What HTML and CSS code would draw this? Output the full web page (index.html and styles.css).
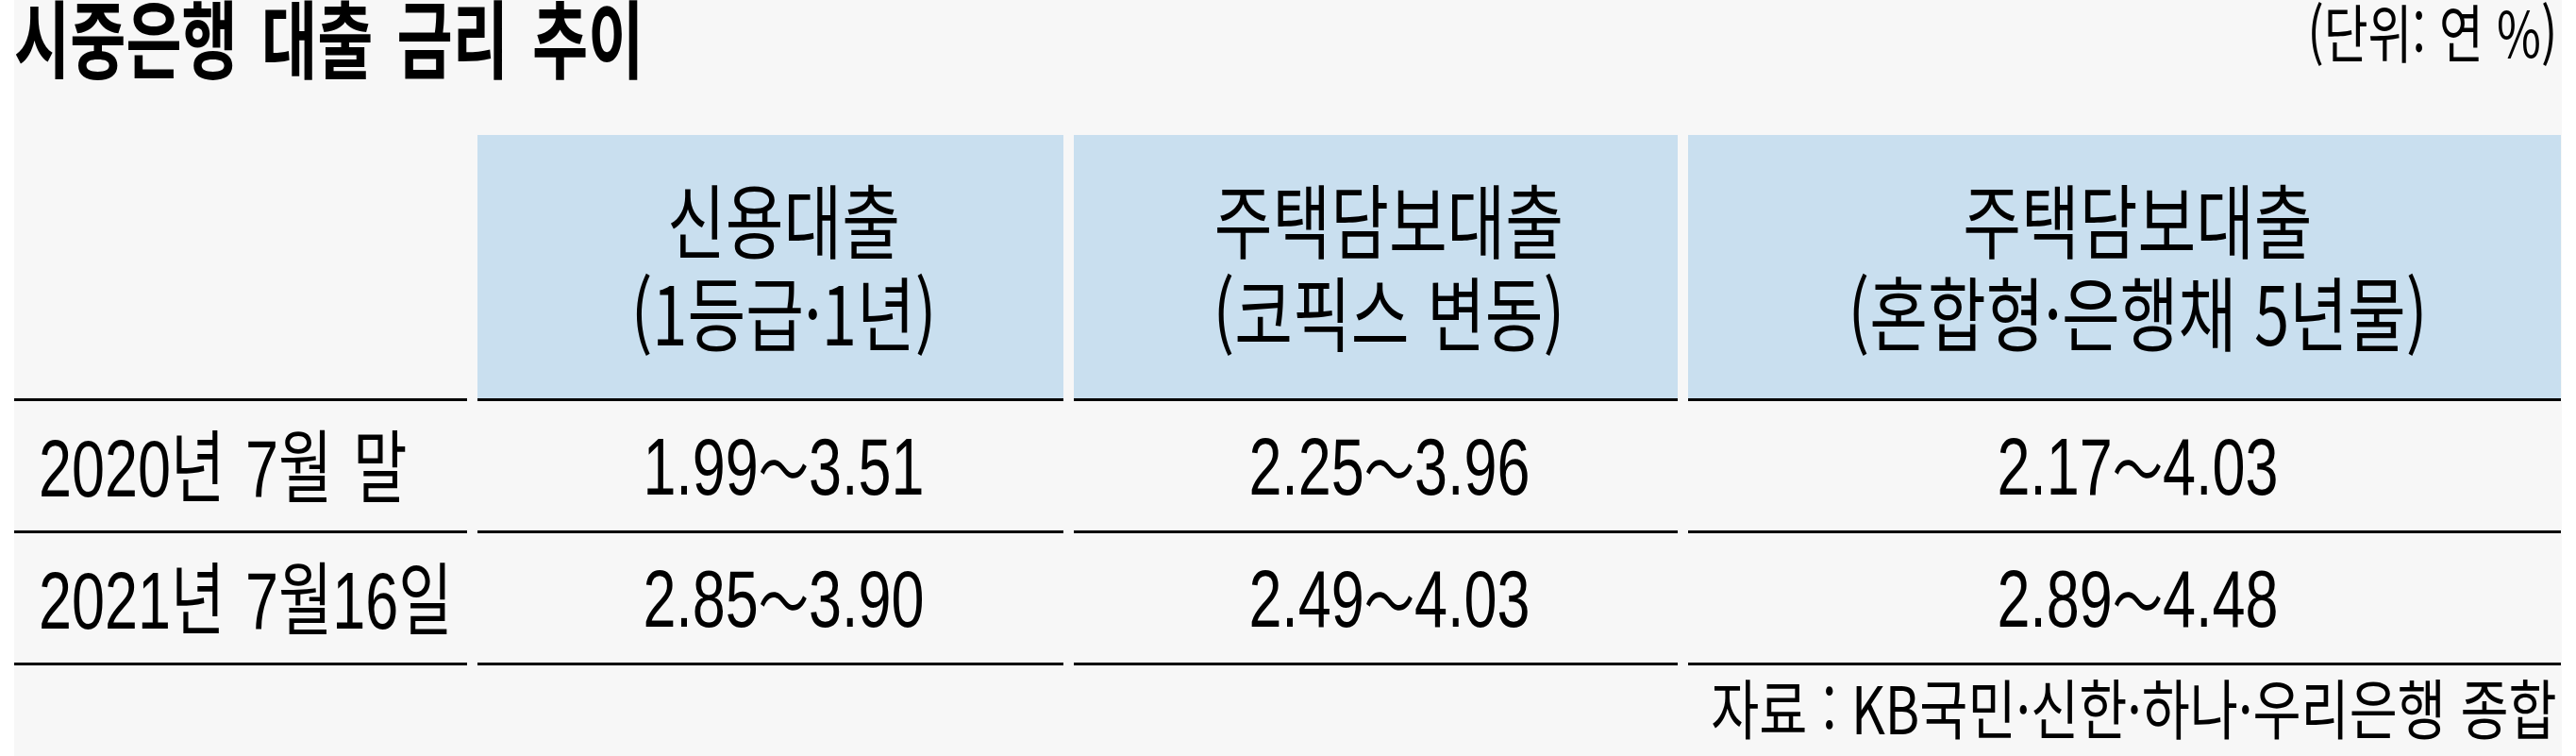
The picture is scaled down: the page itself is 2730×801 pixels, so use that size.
FILE: index.html
```html
<!DOCTYPE html>
<html lang="ko">
<head>
<meta charset="utf-8">
<title>시중은행 대출 금리 추이</title>
<link rel="stylesheet" href="styles.css">
</head>
<body>
<div class="board">
  <div class="top">
    <h1 class="title"><span class="tx">시중은행 대출 금리 추이</span></h1>
    <div class="unit"><span class="ux">(단위: 연 %)</span></div>
  </div>
  <div class="grid">
    <div class="cell head"></div>
    <div class="cell head blue"><div class="hx"><span class="l">신용대출</span><span class="l">(1등급·1년)</span></div></div>
    <div class="cell head blue"><div class="hx"><span class="l">주택담보대출</span><span class="l">(코픽스 변동)</span></div></div>
    <div class="cell head blue"><div class="hx"><span class="l">주택담보대출</span><span class="l">(혼합형·은행채 5년물)</span></div></div>

    <div class="cell lab"><span class="sx">2020<span class="k">년</span> 7<span class="k">월</span> <span class="k">말</span></span></div>
    <div class="cell val"><span class="sx">1.99<span class="tl">～</span>3.51</span></div>
    <div class="cell val"><span class="sx">2.25<span class="tl">～</span>3.96</span></div>
    <div class="cell val"><span class="sx">2.17<span class="tl">～</span>4.03</span></div>

    <div class="cell lab"><span class="sx">2021<span class="k">년</span> 7<span class="k">월</span>16<span class="k">일</span></span></div>
    <div class="cell val"><span class="sx">2.85<span class="tl">～</span>3.90</span></div>
    <div class="cell val"><span class="sx">2.49<span class="tl">～</span>4.03</span></div>
    <div class="cell val"><span class="sx">2.89<span class="tl">～</span>4.48</span></div>
  </div>
  <div class="source"><span class="fx">자료 : KB국민·신한·하나·우리은행 종합</span></div>
</div>
</body>
</html>
```
FILE: styles.css
```css
html, body {
  margin: 0;
  padding: 0;
  background: #ffffff;
}
body {
  font-family: "Noto Sans CJK KR", "Liberation Sans", sans-serif;
  color: #000;
}
.board {
  margin-left: 15px;
  width: 2700px;
  height: 801px;
  background: #f7f7f7;
  overflow: hidden;
}
.top {
  display: flex;
  justify-content: space-between;
  align-items: flex-start;
  height: 143px;
}
.title {
  margin: 0;
  font-size: 90px;
  font-weight: 700;
  line-height: 74px;
  white-space: nowrap;
}
.tx {
  display: inline-block;
  transform: scaleX(0.715);
  transform-origin: left center;
  word-spacing: 10px;
}
.unit {
  padding-top: 2px;
  padding-right: 5px;
  font-size: 67px;
  line-height: 60px;
  white-space: nowrap;
}
.ux {
  display: inline-block;
  transform: scaleX(0.76);
  transform-origin: right center;
}
.grid {
  display: grid;
  grid-template-columns: 480px 621px 640px 925px;
  grid-template-rows: 282px 140px 140px;
  column-gap: 11px;
}
.cell {
  border-bottom: 3px solid #000;
  display: flex;
  align-items: center;
  white-space: nowrap;
}
.blue {
  background: #c9dfef;
}
.head, .val {
  justify-content: center;
  padding-left: 28px;
}
.head {
  padding-bottom: 6px;
}
.hx {
  transform: scaleX(0.78);
  text-align: center;
  font-size: 86px;
  line-height: 98px;
}
.l {
  display: block;
}
.lab {
  padding-left: 26px;
}
.sx {
  display: inline-block;
  transform: scaleX(0.74);
  transform-origin: center center;
  font-family: "Liberation Sans Narrow", "Liberation Sans", "Noto Sans CJK KR", sans-serif;
  font-size: 85px;
  line-height: 100px;
  word-spacing: 6px;
}
.lab .sx {
  transform-origin: left center;
}
.k {
  font-family: "Noto Sans CJK KR", sans-serif;
  font-size: 84px;
}
.tl {
  font-family: "Noto Sans CJK KR", sans-serif;
  font-size: 72px;
}
.source {
  margin-top: 8px;
  padding-right: 5px;
  text-align: right;
  font-size: 69px;
  line-height: 70px;
  white-space: nowrap;
}
.fx {
  display: inline-block;
  transform: scaleX(0.805);
  transform-origin: right center;
}
```
